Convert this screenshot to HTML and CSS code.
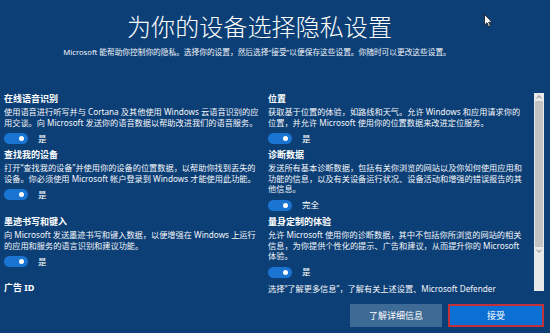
FILE: index.html
```html
<!DOCTYPE html>
<html lang="zh-CN">
<head>
<meta charset="utf-8">
<title>为你的设备选择隐私设置</title>
<link rel="stylesheet" href="styles.css">
</head>
<body>
<div class="page">
  <header class="header">
    <h1 class="title">为你的设备选择隐私设置</h1>
    <p class="subtitle">Microsoft 能帮助你控制你的隐私。选择你的设置，然后选择“接受”以便保存这些设置。你随时可以更改这些设置。</p>
  </header>

  <main class="scroll">
    <div class="cols">
      <section class="item">
        <h2 class="item-title">在线语音识别</h2>
        <p class="item-text">使用语音进行听写并与 Cortana 及其他使用 Windows 云语音识别的应<br>用交谈。向 Microsoft 发送你的语音数据以帮助改进我们的语音服务。</p>
        <div class="switch-row"><span class="toggle"></span><span class="switch-label">是</span></div>
      </section>
      <section class="item">
        <h2 class="item-title">位置</h2>
        <p class="item-text">获取基于位置的体验，如路线和天气。允许 Windows 和应用请求你的<br>位置，并允许 Microsoft 使用你的位置数据来改进定位服务。</p>
        <div class="switch-row"><span class="toggle"></span><span class="switch-label">是</span></div>
      </section>

      <section class="item">
        <h2 class="item-title">查找我的设备</h2>
        <p class="item-text">打开“查找我的设备”并使用你的设备的位置数据，以帮助你找到丢失的<br>设备。你必须使用 Microsoft 帐户登录到 Windows 才能使用此功能。</p>
        <div class="switch-row"><span class="toggle"></span><span class="switch-label">是</span></div>
      </section>
      <section class="item">
        <h2 class="item-title">诊断数据</h2>
        <p class="item-text">发送所有基本诊断数据，包括有关你浏览的网站以及你如何使用应用和<br>功能的信息，以及有关设备运行状况、设备活动和增强的错误报告的其<br>他信息。</p>
        <div class="switch-row"><span class="toggle"></span><span class="switch-label">完全</span></div>
      </section>

      <section class="item">
        <h2 class="item-title">墨迹书写和键入</h2>
        <p class="item-text">向 Microsoft 发送墨迹书写和键入数据，以便增强在 Windows 上运行<br>的应用和服务的语言识别和建议功能。</p>
        <div class="switch-row"><span class="toggle"></span><span class="switch-label">是</span></div>
      </section>
      <section class="item">
        <h2 class="item-title">量身定制的体验</h2>
        <p class="item-text">允许 Microsoft 使用你的诊断数据，其中不包括你所浏览的网站的相关<br>信息，为你提供个性化的提示、广告和建议，从而提升你的 Microsoft<br>体验。</p>
        <div class="switch-row"><span class="toggle"></span><span class="switch-label">是</span></div>
      </section>

      <section class="item">
        <h2 class="item-title last">广告 ID</h2>
      </section>
      <section class="item">
        <p class="item-text note">选择“了解更多信息”，了解有关上述设置、Microsoft Defender</p>
      </section>
    </div>
    <div class="scrollbar">
      <span class="sb-arrow sb-up"></span>
      <span class="sb-thumb"></span>
      <span class="sb-arrow sb-down"></span>
    </div>
  </main>

  <footer class="footer">
    <button class="btn btn-secondary">了解详细信息</button>
    <button class="btn btn-primary">接受</button>
  </footer>

  <svg class="cursor" width="9" height="14" viewBox="0 0 9 14" aria-hidden="true">
    <path d="M0.5 0.5 L0.5 11 L3 8.7 L4.8 12.8 L6.4 12.1 L4.7 8.2 L8 8.2 Z" fill="#fff" stroke="#111" stroke-width="0.8" stroke-linejoin="round"/>
  </svg>
</div>
</body>
</html>
```

FILE: styles.css
```css
* {
  box-sizing: border-box;
}

html, body {
  margin: 0;
  padding: 0;
}

body {
  width: 550px;
  height: 333px;
  overflow: hidden;
  background: #0c3f76;
  color: #ffffff;
  font-family: "Noto Sans", "Noto Sans CJK SC", sans-serif;
}

.page {
  position: relative;
  width: 550px;
  height: 333px;
  display: flex;
  flex-direction: column;
}

.header {
  padding-top: 11px;
  padding-right: 36px;
  text-align: center;
}

.title {
  margin: 0;
  font-family: "Noto Sans CJK SC", sans-serif;
  font-weight: 300;
  font-size: 24px;
  line-height: 30px;
  letter-spacing: 0.1px;
  padding-left: 5px;
}

.subtitle {
  margin: 6px 0 0;
  font-size: 7.7px;
  line-height: 10px;
  white-space: nowrap;
  color: #f2f5f9;
}

.scroll {
  margin-top: 36px;
  height: 200px;
  display: flex;
  overflow: hidden;
}

.cols {
  width: 531px;
  padding-left: 4px;
  display: grid;
  grid-template-columns: 264px 1fr;
  row-gap: 4.5px;
  align-items: start;
  align-content: start;
  overflow: hidden;
}

.item-title {
  margin: 0 0 2px;
  font-family: "Noto Sans", "Noto Sans CJK SC", sans-serif;
  font-weight: 700;
  font-size: 9px;
  line-height: 12px;
}

.item-title.last {
  margin: 0;
  line-height: 9px;
}

.item-text {
  margin: 0;
  font-size: 8.2px;
  line-height: 10.6px;
  white-space: nowrap;
  color: #f4f6f9;
}

.note {
  padding-top: 1px;
}

.switch-row {
  margin-top: 4.5px;
  height: 12px;
  display: flex;
  align-items: center;
  gap: 10px;
}

.toggle {
  position: relative;
  width: 24px;
  height: 11px;
  border-radius: 6px;
  background: #1a74d2;
}

.toggle::after {
  content: "";
  position: absolute;
  right: 4px;
  top: 3px;
  width: 5px;
  height: 5px;
  border-radius: 50%;
  background: #ffffff;
}

.switch-label {
  font-size: 8.5px;
  line-height: 12px;
}

.scrollbar {
  margin-left: 3px;
  width: 10px;
  height: 198px;
  background: #e9e9e9;
  display: flex;
  flex-direction: column;
  align-items: center;
}

.sb-arrow {
  height: 8px;
  width: 10px;
  position: relative;
}

.sb-arrow::after {
  content: "";
  position: absolute;
  left: 3px;
  width: 3px;
  height: 3px;
  border-left: 1px solid #9a9a9a;
  border-top: 1px solid #9a9a9a;
}

.sb-up::after {
  top: 3px;
  transform: rotate(45deg);
}

.sb-down::after {
  top: 1px;
  transform: rotate(-135deg);
}

.sb-thumb {
  width: 8px;
  height: 146px;
  background: #c3c3c3;
}

.footer {
  margin-top: 11px;
  display: flex;
  justify-content: flex-end;
  gap: 6px;
  padding-right: 6px;
}

.btn {
  height: 23px;
  border: none;
  color: #ffffff;
  font-family: "Noto Sans CJK SC", sans-serif;
  font-size: 9px;
  line-height: 23px;
  padding: 0;
}

.btn-secondary {
  width: 92px;
  background: #3e6a96;
}

.btn-primary {
  width: 96px;
  background: #0b6fd3;
  border: 2px solid #c4303a;
  line-height: 19px;
}

.cursor {
  position: absolute;
  left: 484px;
  top: 14px;
}
```
